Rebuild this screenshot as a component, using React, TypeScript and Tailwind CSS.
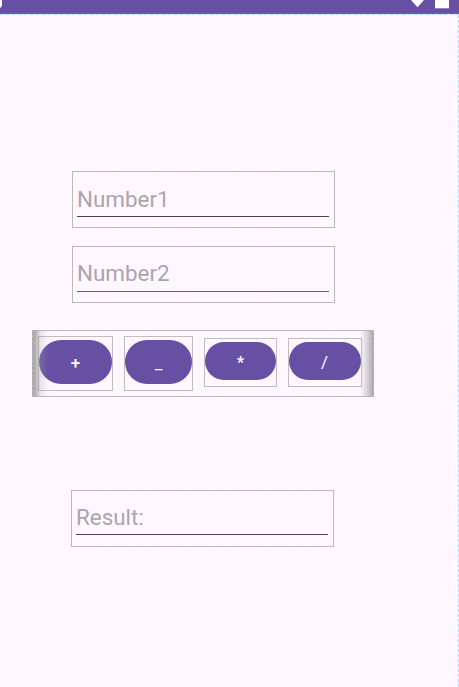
type FieldProps = { hint: string; className: string; line: string };

function Field({ hint, className, line }: FieldProps) {
  return (
    <div className={`relative h-[57px] w-[263px] border border-[#bfbcc0] px-1 ${className}`}>
      <div className="pointer-events-none absolute -inset-px border border-dashed border-[#b6b9b6]" />
      <div className={`w-[252px] border-b text-[22.4px] leading-[27px] text-[#aaa5ad] ${line}`}>
        {hint}
      </div>
    </div>
  );
}

type KeyProps = { label: string; box: string; pill: string; text: string };

function Key({ label, box, pill, text }: KeyProps) {
  return (
    <div className={`border border-[#c0bdc1] pt-[3px] ${box}`}>
      <button className={`flex w-full items-center justify-center rounded-full bg-[#6750a4] text-white ${pill}`}>
        <span className={`block leading-5 ${text}`}>{label}</span>
      </button>
    </div>
  );
}

export default function App() {
  return (
    <div className="relative h-[687px] w-[459px] overflow-hidden bg-[#fef7ff] font-['Roboto',sans-serif]">
      <header className="relative h-[15px] bg-[#6750a4]">
        <svg className="block" width="459" height="15" viewBox="0 0 459 15">
          <path d="M0 0H2V5Q2 7 0 8Z" fill="#fff" />
          <path d="M411 0H424L417.5 7.2Z" fill="#fff" />
          <rect x="435" y="0" width="14" height="8.3" fill="#fff" />
          <rect x="0" y="13" width="459" height="1" fill="#287de8" />
          <rect x="0" y="14" width="459" height="1" fill="#e1edff" />
          <path d="M0 14.5H459" stroke="#bcdcfb" strokeWidth="1" strokeDasharray="3 3" />
        </svg>
      </header>
      <div className="absolute right-0 top-[15px] h-[672px] border-r border-dashed border-[#b5d8fa]" />

      <main>
        <Field hint="Number1" className="ml-[72px] mt-[156px]" line="h-[45px] pt-[14px] border-[#49454f]" />
        <Field hint="Number2" className="ml-[72px] mt-[18px]" line="h-[45px] pt-[13px] border-[#625e68]" />

        <div className="relative ml-8 mt-[27px] flex h-[67px] w-[342px] border border-[#bfbcc0] pl-[5px]">
          <Key label="+" box="mt-[5px] h-[55px] w-[75px]" pill="h-[44px]" text="text-[17px] font-medium mt-[2px]" />
          <Key label="_" box="ml-[11px] mt-[5px] h-[55px] w-[69px]" pill="h-[44px]" text="text-[17px] mt-[1px]" />
          <Key label="*" box="ml-[11px] mt-[7px] h-[49px] w-[73px]" pill="h-[38px]" text="text-[17px] font-medium mt-[2px]" />
          <Key label="/" box="ml-[11px] mt-[7px] h-[49px] w-[74px]" pill="h-[38px]" text="text-[17px] mt-[2px] -ml-px" />
          <div className="absolute -left-px -top-px h-[67px] w-[17px] bg-linear-to-r from-[#a5a2a6]/90 from-15% via-[#a5a2a6]/25 to-transparent" />
          <div className="absolute -right-px -top-px h-[67px] w-[14px] bg-linear-to-l from-[#a5a2a6] via-[#a5a2a6]/40 to-transparent" />
          <div className="absolute -inset-px border border-dashed border-[#b6b9b6]" />
        </div>

        <Field hint="Result:" className="ml-[71px] mt-[93px]" line="h-[44px] pt-[13px] border-[#49454f]" />
      </main>
    </div>
  );
}
